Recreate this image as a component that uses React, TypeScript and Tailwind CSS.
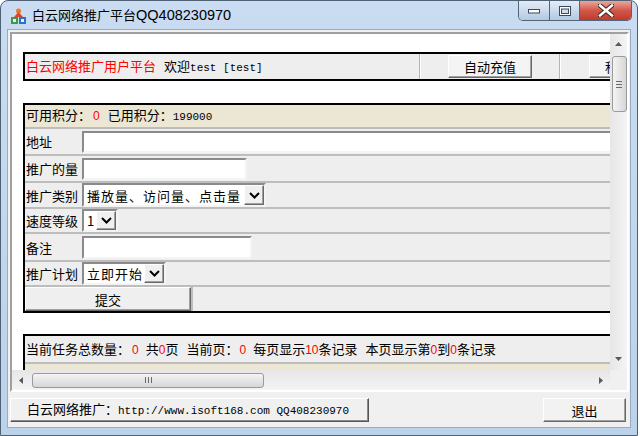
import React from "react";

const cjk = "font-['Noto_Sans_CJK_SC',sans-serif]";
const mono = "font-['Liberation_Mono','Noto_Sans_CJK_SC',monospace] text-[11px]";
const red = "font-['Liberation_Sans',sans-serif] text-[12px] text-[#ff0000]";
const raised =
  "border border-t-white border-l-white border-r-[#696969] border-b-[#696969] shadow-[inset_-1px_-1px_0_#a0a0a0]";
const sunken =
  "border-2 border-t-[#8a8a8a] border-l-[#8a8a8a] border-r-[#f4f4f4] border-b-[#f4f4f4] bg-white";

const Chevron = () => (
  <svg width="11" height="7" viewBox="0 0 11 7">
    <path d="M1 1 L5.5 5.5 L10 1" fill="none" stroke="#000" strokeWidth="2" />
  </svg>
);

const Tri = ({ dir }: { dir: "up" | "down" | "left" | "right" }) => {
  const pts = {
    up: "0,4 3.5,0 7,4",
    down: "0,0 3.5,4 7,0",
    left: "4,0 0,3.5 4,7",
    right: "0,0 4,3.5 0,7",
  }[dir];
  const vert = dir === "up" || dir === "down";
  return (
    <svg width={vert ? 7 : 4} height={vert ? 4 : 7} viewBox={vert ? "0 0 7 4" : "0 0 4 7"}>
      <polygon points={pts} fill="#5a5a5a" />
    </svg>
  );
};

const Select = ({ text, w, arrow }: { text: string; w: string; arrow: string }) => (
  <div className={`flex h-full items-stretch ${sunken} ${w}`}>
    <div className="flex flex-1 items-center pl-[3px] text-[13px] tracking-[1px] leading-none">{text}</div>
    <div className={`flex items-center justify-center bg-[#f0f0f0] ${raised} ${arrow}`}>
      <Chevron />
    </div>
  </div>
);

const Row = ({ label, h, children }: { label: string; h: string; children: React.ReactNode }) => (
  <div className={`flex bg-[#eeeeee] ${h}`}>
    <div className="flex w-[57px] items-center pl-[1px] text-[13px] leading-none">{label}</div>
    <div className="flex flex-1 items-center">{children}</div>
  </div>
);

export default function App() {
  return (
    <div className={`${cjk} relative h-[436px] w-[640px] overflow-hidden bg-white text-black`}>
      <div className="h-[436px] w-[638px] rounded-t-[8px] border border-[#4f6275] bg-gradient-to-b from-[#c9dcf1] to-[#bcd2ea]">
        {/* title bar */}
        <div className="flex h-[28px] items-start">
          <div className="ml-[9px] mt-[7px]">
            <svg width="17" height="17" viewBox="0 0 17 17">
              <circle cx="8.5" cy="3" r="2.5" fill="#e8782a" />
              <path d="M4 9 L8.5 4 L13 9 Z" fill="#d9472b" />
              <rect x="1" y="9" width="7" height="7" fill="#3c9a44" />
              <rect x="9" y="9" width="7" height="7" fill="#2f6fd0" />
              <rect x="3" y="11" width="3" height="3" fill="#e9f4ff" />
              <rect x="11" y="11" width="3" height="3" fill="#e9f4ff" />
            </svg>
          </div>
          <div className="ml-[5px] mt-[5px] text-[13px] leading-[18px] text-black">
            白云网络推广平台<span className="font-['Liberation_Sans',sans-serif] text-[14.5px]">QQ408230970</span>
          </div>
          <div className="ml-auto mr-[5px] flex h-[20px] overflow-hidden rounded-b-[5px] border border-t-0 border-[#52657b]">
            <div className="flex w-[31px] items-center justify-center border-r border-[#52657b] bg-gradient-to-b from-[#e4edf8] to-[#b4c8e0]">
              <svg width="13" height="6" viewBox="0 0 13 6">
                <rect x="0.5" y="1.5" width="11" height="3.5" fill="#fff" stroke="#3a4a5e" />
              </svg>
            </div>
            <div className="flex w-[30px] items-center justify-center border-r border-[#52657b] bg-gradient-to-b from-[#e4edf8] to-[#b4c8e0]">
              <svg width="12" height="10" viewBox="0 0 12 10">
                <rect x="0.5" y="0.5" width="11" height="9" fill="#fff" stroke="#3a4a5e" />
                <rect x="2.5" y="3" width="7" height="4.5" fill="#cfdcec" stroke="#3a4a5e" />
              </svg>
            </div>
            <div className="flex w-[51px] items-center justify-center bg-gradient-to-b from-[#e9a79b] via-[#d0574a] to-[#c2392a]">
              <svg width="16" height="13" viewBox="0 0 16 13">
                <path d="M2 1.5 L14 11.5 M14 1.5 L2 11.5" stroke="#3b2520" strokeWidth="4.5" strokeLinecap="square" />
                <path d="M2 1.5 L14 11.5 M14 1.5 L2 11.5" stroke="#fff" strokeWidth="2.5" strokeLinecap="square" />
              </svg>
            </div>
          </div>
        </div>

        {/* client area */}
        <div className="ml-[6px] flex h-[399px] w-[624px] flex-col border border-[#98abc2] bg-[#f0f0f0]">
          <div className="ml-[2px] mt-[2px] flex h-[360px] w-[619px] flex-col border-2 border-t-[#a0a0a0] border-l-[#a0a0a0] border-r-white border-b-white">
            <div className="flex h-[336px]">
              {/* page */}
              <div className="w-[598px] overflow-hidden bg-white pl-[11px] pt-[18px]">
                <div className="w-[720px]">
                  {/* table 1 */}
                  <div className="flex h-[29px] border-y-2 border-l-2 border-black bg-[#eeeeee]">
                    <div className="flex w-[394px] items-center pl-[1px]">
                      <div className="text-[13px] leading-[16px]">
                        <span className="text-[#ff0000]">白云网络推广用户平台</span>
                        <span className="ml-[8px]">欢迎</span>
                        <span className={mono}>test [test]</span>
                      </div>
                    </div>
                    <div className="w-[2px] border-l border-[#b4b4b4] bg-white" />
                    <div className="flex w-[138px] items-start pl-[27px] pt-[1px]">
                      <div className={`flex h-[23px] w-[84px] items-center justify-center bg-[#f4f4f4] text-[13px] leading-none ${raised}`}>
                        自动充值
                      </div>
                    </div>
                    <div className="w-[2px] border-l border-[#b4b4b4] bg-white" />
                    <div className="flex flex-1 items-start pl-[28px] pt-[1px]">
                      <div className={`flex h-[23px] w-[84px] items-center justify-center bg-[#f4f4f4] text-[13px] leading-none ${raised}`}>
                        积分记录
                      </div>
                    </div>
                  </div>

                  {/* table 2 */}
                  <div className="mt-[22px] flex flex-col gap-[2px] border-y-2 border-l-2 border-black bg-[#bdbdbd]">
                    <div className="flex h-[22px] items-center bg-[#ece7d5] pl-[1px]">
                      <div className="text-[13px] leading-[16px]">
                        可用积分：<span className={`${red} ml-[2px]`}>0</span>
                        <span className="ml-[8px]">已用积分：</span>
                        <span className={mono}>199000</span>
                      </div>
                    </div>
                    <Row label="地址" h="h-[25px]">
                      <div className={`h-[22px] flex-1 ${sunken}`} />
                    </Row>
                    <Row label="推广的量" h="h-[25px]">
                      <div className={`h-[22px] w-[165px] ${sunken}`} />
                    </Row>
                    <Row label="推广类别" h="h-[24px]">
                      <Select text="播放量、访问量、点击量" w="w-[184px]" arrow="w-[20px]" />
                    </Row>
                    <Row label="速度等级" h="h-[23px]">
                      <Select text="1" w="w-[36px]" arrow="w-[20px]" />
                    </Row>
                    <Row label="备注" h="h-[26px]">
                      <div className={`h-[23px] w-[170px] ${sunken}`} />
                    </Row>
                    <Row label="推广计划" h="h-[23px]">
                      <Select text="立即开始" w="w-[84px]" arrow="w-[20px]" />
                    </Row>
                    <div className="flex h-[24px] gap-[2px]">
                      <div className={`flex w-[166px] items-center justify-center bg-[#efefef] text-[13px] leading-none ${raised}`}>
                        提交
                      </div>
                      <div className="flex-1 bg-[#eeeeee]" />
                    </div>
                  </div>

                  {/* table 3 */}
                  <div className="mt-[21px] flex flex-col gap-[2px] border-t-2 border-l-2 border-black bg-[#bdbdbd]">
                    <div className="flex h-[26px] items-center bg-[#eeeeee] pl-[1px]">
                      <div className="text-[13px] leading-[16px]">
                        当前任务总数量：<span className={`${red} ml-[2px] mr-[7px]`}>0</span>共
                        <span className={red}>0</span>页<span className="ml-[8px]">当前页：</span>
                        <span className={`${red} ml-[1px] mr-[7px]`}>0</span>每页显示
                        <span className={red}>10</span>条记录<span className="ml-[8px]">本页显示第</span>
                        <span className={red}>0</span>到<span className={red}>0</span>条记录
                      </div>
                    </div>
                    <div className="h-[20px] bg-[#ece7d5]" />
                  </div>
                </div>
              </div>
              {/* vertical scrollbar */}
              <div className="flex w-[17px] flex-col items-center bg-gradient-to-r from-[#e6e6e6] to-[#f4f4f4]">
                <div className="flex h-[17px] items-center justify-center pt-[2px]">
                  <Tri dir="up" />
                </div>
                <div className="ml-[1px] mt-[5px] flex h-[56px] w-[15px] flex-col items-center justify-center gap-[2px] rounded-[3px] border border-[#9a9a9a] bg-gradient-to-r from-[#f4f4f4] to-[#d6d6d6]">
                  <div className="h-[1px] w-[6px] bg-[#6a6a6a]" />
                  <div className="h-[1px] w-[6px] bg-[#6a6a6a]" />
                  <div className="h-[1px] w-[6px] bg-[#6a6a6a]" />
                </div>
                <div className="mt-auto flex h-[17px] items-center justify-center pb-[6px]">
                  <Tri dir="down" />
                </div>
              </div>
            </div>
            {/* horizontal scrollbar */}
            <div className="flex h-[20px]">
              <div className="flex w-[598px] items-center bg-gradient-to-b from-[#e6e6e6] to-[#f4f4f4]">
                <div className="flex w-[18px] items-center justify-center">
                  <Tri dir="left" />
                </div>
                <div className="ml-[2px] flex h-[15px] w-[232px] items-center justify-center gap-[2px] rounded-[3px] border border-[#9a9a9a] bg-gradient-to-b from-[#f4f4f4] to-[#d6d6d6]">
                  <div className="h-[6px] w-[1px] bg-[#6a6a6a]" />
                  <div className="h-[6px] w-[1px] bg-[#6a6a6a]" />
                  <div className="h-[6px] w-[1px] bg-[#6a6a6a]" />
                </div>
                <div className="ml-auto mr-[7px] flex items-center">
                  <Tri dir="right" />
                </div>
              </div>
              <div className="w-[17px] bg-[#f0f0f0]" />
            </div>
          </div>

          {/* bottom bar */}
          <div className="mt-[6px] flex h-[24px] pl-[2px] pr-[4px]">
            <div className="flex w-[359px] items-center border border-t-white border-l-white border-r-[#555] border-b-[#555] pl-[16px] shadow-[inset_-1px_-1px_0_#8a8a8a]">
              <div className="text-[13px] leading-[16px]">
                白云网络推广：<span className={mono}>http://www.isoft168.com QQ408230970</span>
              </div>
            </div>
            <div className={`ml-auto flex w-[83px] items-center justify-center bg-[#f2f2f2] text-[13px] leading-none ${raised}`}>
              退出
            </div>
          </div>
        </div>
      </div>
    </div>
  );
}
